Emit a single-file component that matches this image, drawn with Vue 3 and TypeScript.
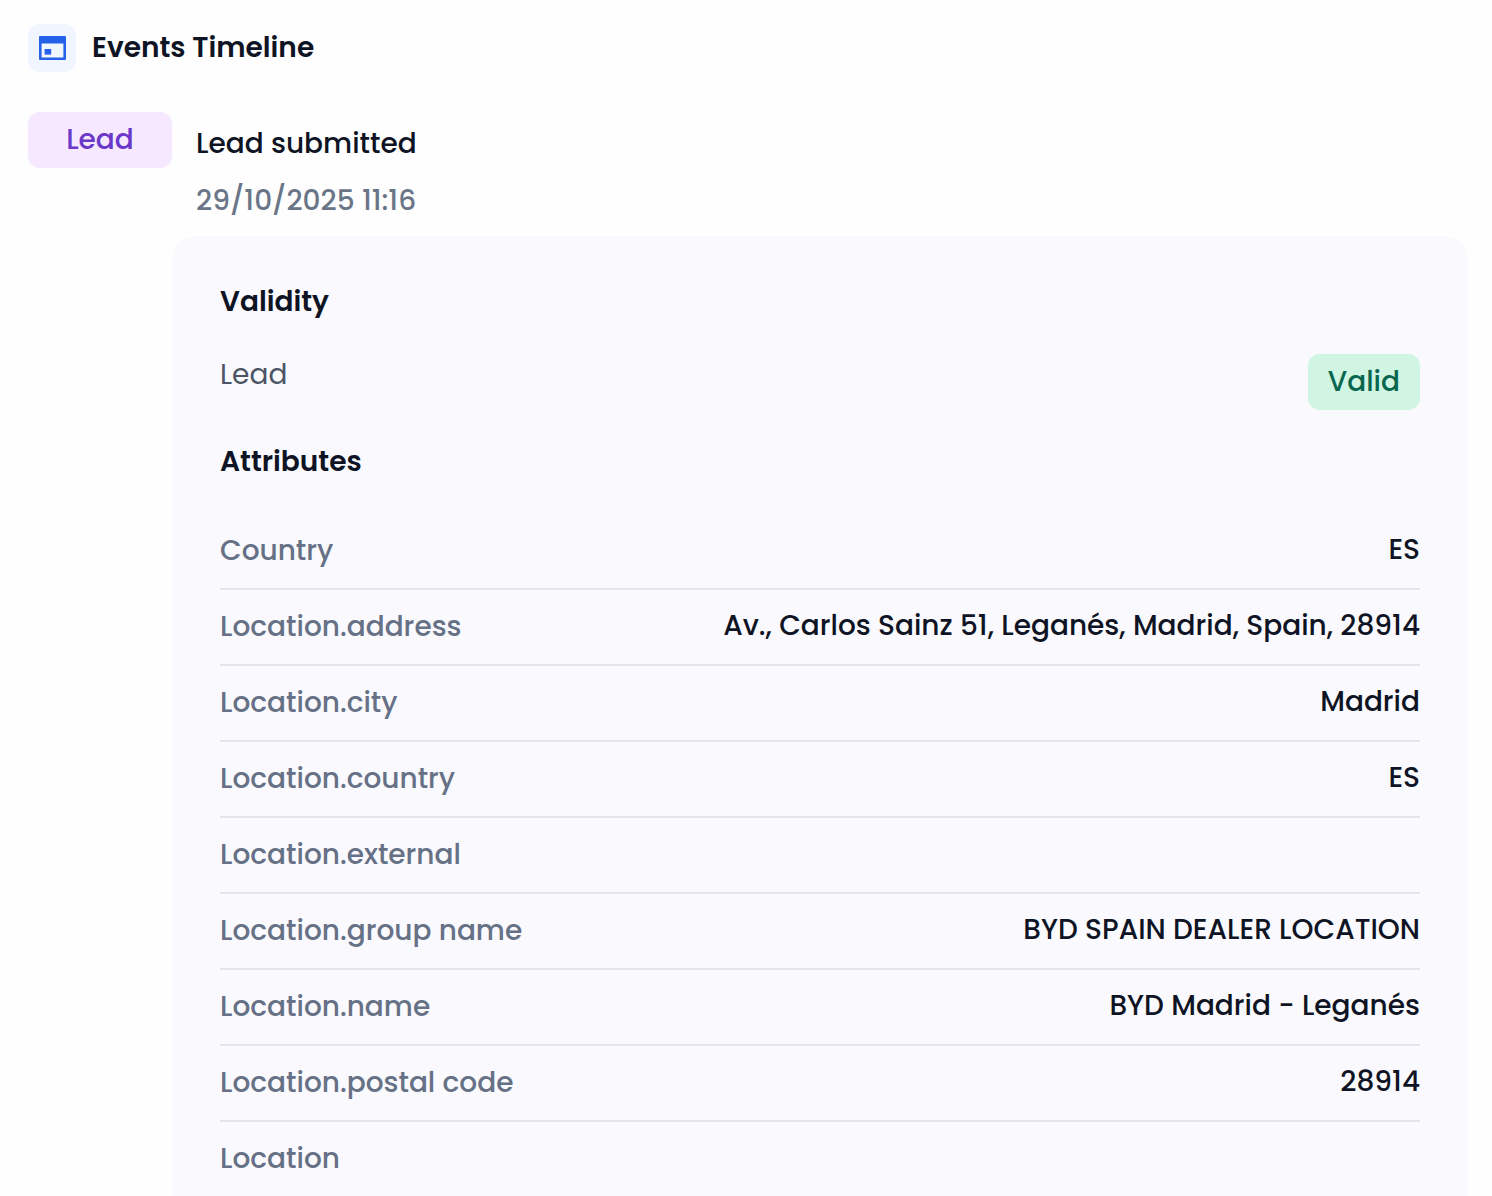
<script setup lang="ts">
interface Attribute {
  label: string
  value: string
}

const attributes: Attribute[] = [
  { label: 'Country', value: 'ES' },
  { label: 'Location.address', value: 'Av., Carlos Sainz 51, Leganés, Madrid, Spain, 28914' },
  { label: 'Location.city', value: 'Madrid' },
  { label: 'Location.country', value: 'ES' },
  { label: 'Location.external', value: '' },
  { label: 'Location.group name', value: 'BYD SPAIN DEALER LOCATION' },
  { label: 'Location.name', value: 'BYD Madrid - Leganés' },
  { label: 'Location.postal code', value: '28914' },
  { label: 'Location', value: '' },
]
</script>

<template>
  <main class="timeline">
    <header class="timeline-header">
      <span class="header-icon">
        <svg width="28" height="24" viewBox="0 0 28 24" aria-hidden="true">
          <path
            fill="#2560e8"
            fill-rule="evenodd"
            d="M2 0H27Q28 0 28 1V23Q28 24 27 24H2Q1 24 1 23V1Q1 0 2 0ZM3.6 7.4V21.6H25.4V7.4Z"
          />
          <rect x="6.6" y="13" width="6.6" height="5.6" fill="#2560e8" />
        </svg>
      </span>
      <h1>Events Timeline</h1>
    </header>

    <article class="event">
      <span class="badge badge-type">Lead</span>
      <div class="event-body">
        <div class="event-heading">
          <h2>Lead submitted</h2>
          <time datetime="2025-10-29T11:16">29/10/2025 11:16</time>
        </div>

        <div class="card">
          <h3>Validity</h3>
          <div class="validity">
            <span class="validity-label">Lead</span>
            <span class="badge badge-valid">Valid</span>
          </div>

          <h3>Attributes</h3>
          <table>
            <tbody>
              <tr v-for="item in attributes" :key="item.label">
                <th scope="row">{{ item.label }}</th>
                <td>{{ item.value }}</td>
              </tr>
            </tbody>
          </table>
        </div>
      </div>
    </article>
  </main>
</template>

<style>
body {
  background: #fefefe;
}
</style>

<style scoped>
.timeline {
  padding: 24px 24px 0 28px;
  font-family: Poppins, Inter, sans-serif;
  font-size: 28px;
  line-height: 40px;
  font-weight: 500;
  color: #0f1424;
}

h1,
h2,
h3 {
  margin: 0;
  font-size: inherit;
  font-weight: 600;
}

.timeline-header {
  display: flex;
  align-items: center;
  gap: 16px;
  margin-bottom: 40px;
}

.header-icon {
  display: flex;
  align-items: center;
  justify-content: center;
  width: 48px;
  height: 48px;
  border-radius: 12px;
  background: #f0f5ff;
}

.event {
  display: flex;
  align-items: flex-start;
}

.badge {
  box-sizing: border-box;
  height: 56px;
  padding: 8px 20px;
  border-radius: 12px;
  text-align: center;
}

.badge-type {
  flex: none;
  width: 144px;
  background: #f5e8ff;
  color: #6b38c9;
}

.badge-valid {
  background: #d0f5e2;
  color: #08664f;
  font-weight: 500;
}

.event-body {
  flex: 1;
  min-width: 0;
}

.event-heading {
  display: flex;
  flex-direction: column;
  gap: 16px;
  padding: 12px 24px 14px;
}

h2 {
  font-weight: 500;
}

time {
  line-height: 42px;
  color: #6a7588;
}

.card {
  padding: 46px 48px;
  border-radius: 24px;
  background: #f9f9fe;
}

.validity {
  display: flex;
  align-items: flex-start;
  justify-content: space-between;
  margin: 32px 0;
}

.validity-label {
  line-height: 42px;
  font-weight: 400;
  color: #4b5566;
}

table {
  width: 100%;
  margin-top: 32px;
  border-collapse: collapse;
}

th,
td {
  padding: 16px 0;
  border-bottom: 2px solid #e3e6ec;
  font-weight: 500;
  vertical-align: top;
}

th {
  line-height: 42px;
  color: #667186;
  text-align: left;
}

td {
  text-align: right;
}
</style>
